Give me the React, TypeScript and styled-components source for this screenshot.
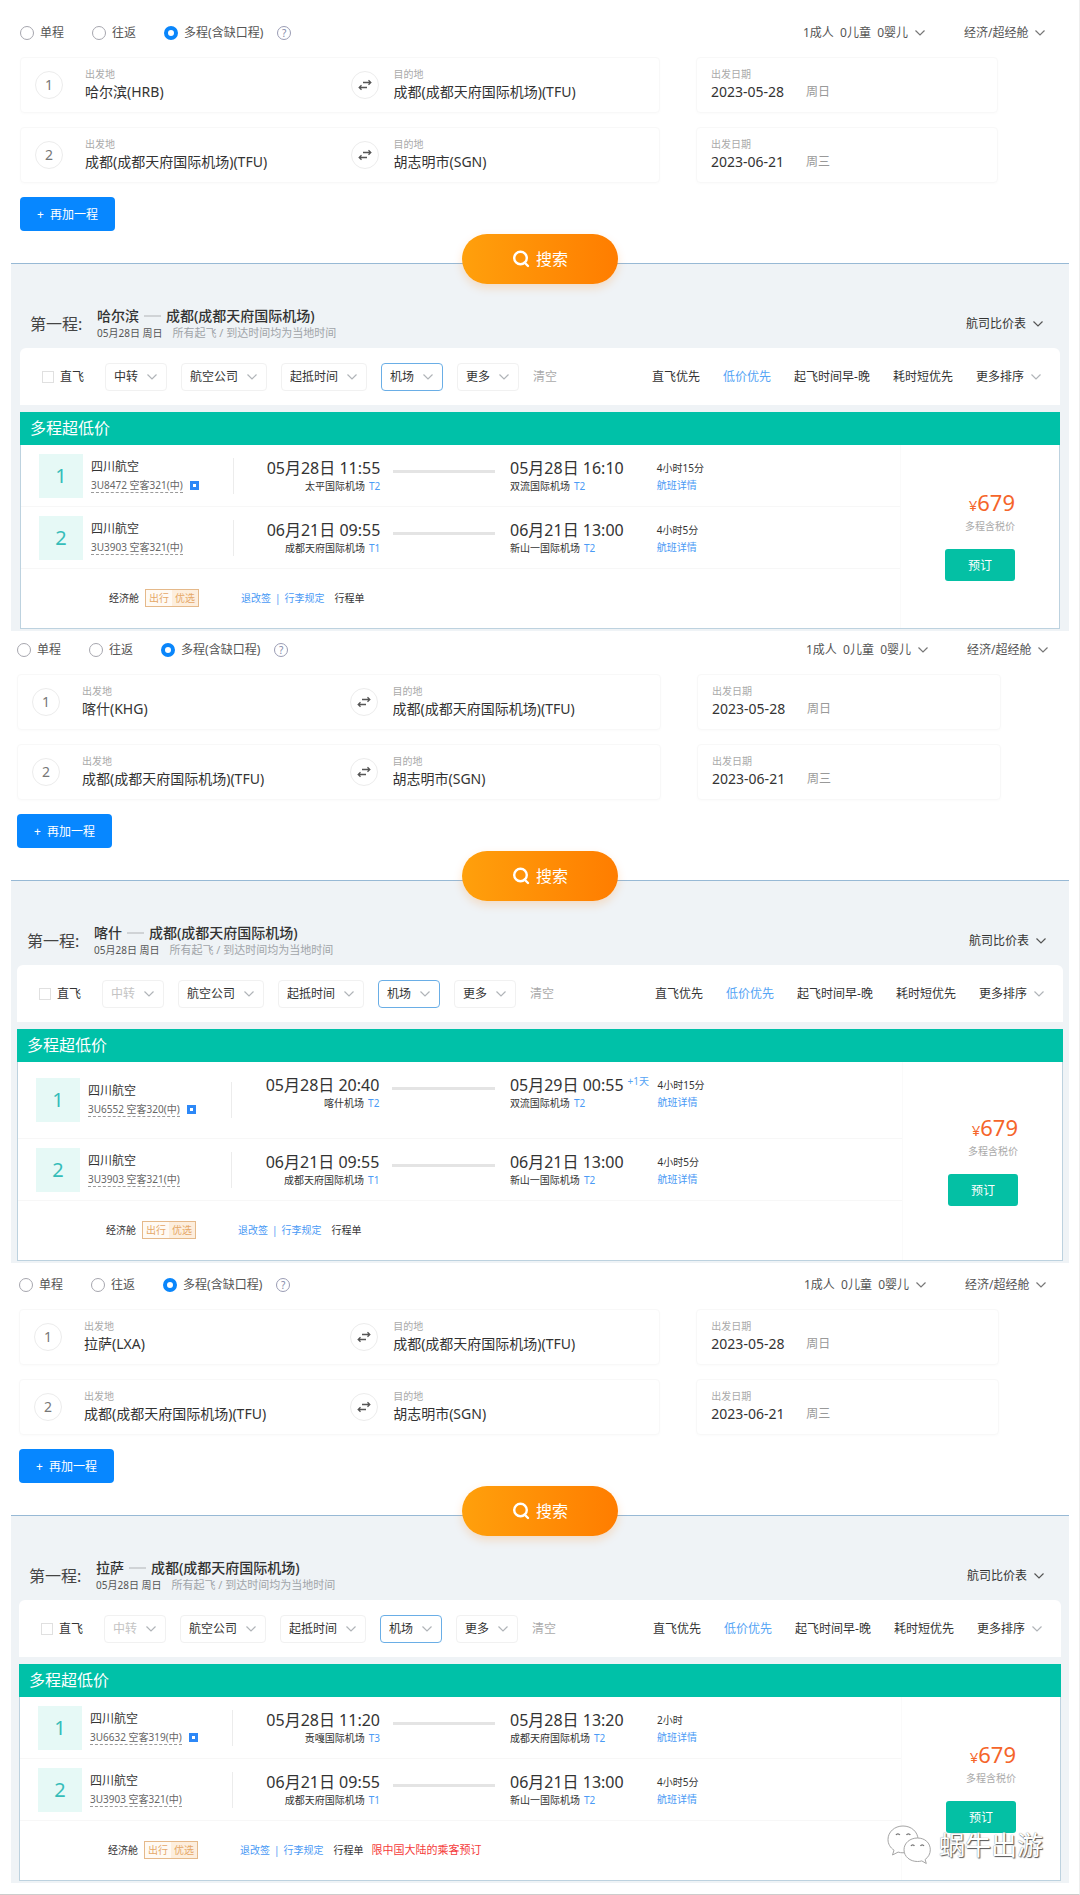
import React, { useId, useState } from "react";
import styled, { createGlobalStyle } from "styled-components";

const GlobalStyle = createGlobalStyle`
  *, *::before, *::after { box-sizing: border-box; }
  body {
    margin: 0;
    background: #fff;
    color: #333;
    font-family: "Noto Sans", "Noto Sans CJK SC", sans-serif;
    font-size: 12px;
    line-height: 18px;
  }
  button, input, select { font-family: inherit; color: inherit; }
  a { color: #4a9af5; text-decoration: none; }
`;

type Flight = {
  number: string;
  shared?: boolean;
  depart: string;
  departAirport: string;
  departTerminal: string;
  arrive: string;
  arriveAirport: string;
  arriveTerminal: string;
  dayShift?: string;
  duration: string;
  tall?: boolean;
};

type Search = {
  city: string;
  code: string;
  inset: number;
  top: number;
  transferDisabled: boolean;
  flights: Flight[];
  warning?: string;
};

const returnFlight: Flight = {
  number: "3U3903 空客321(中)",
  depart: "06月21日 09:55",
  departAirport: "成都天府国际机场",
  departTerminal: "T1",
  arrive: "06月21日 13:00",
  arriveAirport: "新山一国际机场",
  arriveTerminal: "T2",
  duration: "4小时5分",
};

const searches: Search[] = [
  {
    city: "哈尔滨",
    code: "HRB",
    inset: 9,
    top: 23,
    transferDisabled: false,
    flights: [
      {
        number: "3U8472 空客321(中)",
        shared: true,
        depart: "05月28日 11:55",
        departAirport: "太平国际机场",
        departTerminal: "T2",
        arrive: "05月28日 16:10",
        arriveAirport: "双流国际机场",
        arriveTerminal: "T2",
        duration: "4小时15分",
      },
      returnFlight,
    ],
  },
  {
    city: "喀什",
    code: "KHG",
    inset: 6,
    top: 9,
    transferDisabled: true,
    flights: [
      {
        number: "3U6552 空客320(中)",
        shared: true,
        depart: "05月28日 20:40",
        departAirport: "喀什机场",
        departTerminal: "T2",
        arrive: "05月29日 00:55",
        arriveAirport: "双流国际机场",
        arriveTerminal: "T2",
        dayShift: "+1天",
        duration: "4小时15分",
        tall: true,
      },
      returnFlight,
    ],
  },
  {
    city: "拉萨",
    code: "LXA",
    inset: 8,
    top: 12,
    transferDisabled: true,
    flights: [
      {
        number: "3U6632 空客319(中)",
        shared: true,
        depart: "05月28日 11:20",
        departAirport: "贡嘎国际机场",
        departTerminal: "T3",
        arrive: "05月28日 13:20",
        arriveAirport: "成都天府国际机场",
        arriveTerminal: "T2",
        duration: "2小时",
      },
      returnFlight,
    ],
    warning: "限中国大陆的乘客预订",
  },
];

/* ---------- page ---------- */

const Page = styled.main`
  position: relative;
  min-height: 100vh;
  padding: 0 10px 0 11px;
  border-right: 1px solid #eeeeee;
  border-bottom: 1px solid #cccccc;
`;

/* ---------- search form ---------- */

const SearchForm = styled.form<{ $inset: number; $top: number }>`
  display: flex;
  flex-direction: column;
  padding: ${(p) => p.$top}px ${(p) => p.$inset}px 0;
`;

const TopRow = styled.div`
  display: flex;
  align-items: center;
  justify-content: space-between;
  height: 20px;
  padding-right: 14px;
  margin-bottom: 14px;
`;

const TripTypes = styled.div`
  display: flex;
  align-items: center;
  gap: 28px;
`;

const Option = styled.label`
  display: flex;
  align-items: center;
  gap: 6px;
  color: #555;
`;

const Radio = styled.input`
  appearance: none;
  width: 14px;
  height: 14px;
  margin: 0;
  border: 1px solid #a6a6ae;
  border-radius: 50%;
  background: #fff;
  &:checked { border: 4px solid #0a86fb; }
`;

const WithHelp = styled.div`
  display: flex;
  align-items: center;
  gap: 14px;
`;

const HelpButton = styled.button`
  width: 14px;
  height: 14px;
  padding: 0;
  border: 1px solid #9a9cb4;
  border-radius: 50%;
  background: none;
  color: #8288a8;
  font-size: 10px;
  line-height: 12px;
`;

const TopMenus = styled.div`
  display: flex;
  gap: 38px;
  color: #555;
`;

const Segments = styled.div`
  display: grid;
  row-gap: 14px;
  margin-bottom: 14px;
`;

const Segment = styled.div`
  display: grid;
  grid-template-columns: 640fr 302fr;
  column-gap: 36px;
  padding-right: 62px;
`;

const Card = styled.div`
  height: 56px;
  border: 1px solid #f8f8f8;
  border-radius: 4px;
  box-shadow: 0 1px 3px rgba(0, 0, 0, 0.02);
`;

const RouteCard = styled(Card)`
  display: grid;
  grid-template-columns: 50px 1fr 43px 1fr;
  align-items: center;
  padding-left: 14px;
`;

const DateCard = styled(Card)`
  display: flex;
  align-items: center;
  padding-left: 14px;
`;

const Circle = styled.span`
  display: flex;
  align-items: center;
  justify-content: center;
  width: 28px;
  height: 28px;
  border: 1px solid #ececec;
  border-radius: 50%;
  color: #777;
  font-size: 14px;
`;

const SwapButton = styled.button`
  display: flex;
  align-items: center;
  justify-content: center;
  width: 28px;
  height: 28px;
  padding: 0;
  border: 1px solid #ececec;
  border-radius: 50%;
  background: #fff;
`;

const FieldBox = styled.div`
  display: flex;
  flex-direction: column;
  min-width: 0;
  padding-bottom: 3px;
`;

const FieldLabel = styled.label`
  color: #aaa;
  font-size: 10px;
  line-height: 16px;
`;

const FieldInput = styled.input<{ $short?: boolean }>`
  width: ${(p) => (p.$short ? "95px" : "100%")};
  height: 20px;
  padding: 0;
  border: 0;
  outline: 0;
  background: none;
  font-size: 14px;
  line-height: 20px;
`;

const DateLine = styled.div`
  display: flex;
  align-items: center;
  color: #999;
  input { color: #333; }
`;

const AddButton = styled.button`
  align-self: flex-start;
  height: 34px;
  padding: 0 17px;
  border: 0;
  border-radius: 4px;
  background: #0787ff;
  color: #fff;
  font-size: 12px;
  white-space: pre;
`;

const SubmitButton = styled.button`
  position: relative;
  z-index: 1;
  align-self: center;
  display: flex;
  align-items: center;
  justify-content: center;
  gap: 6px;
  width: 156px;
  height: 50px;
  margin: 3px 0 -21px;
  border: 0;
  border-radius: 25px;
  background: linear-gradient(90deg, #ffa00c, #ff7d00);
  box-shadow: 0 4px 10px rgba(255, 125, 0, 0.2);
  color: #fff;
  font-size: 16px;
  line-height: 20px;
`;

/* ---------- drop-downs ---------- */

const MenuBox = styled.span<{ $boxed?: boolean; $active?: boolean }>`
  display: inline-flex;
  align-items: center;
  gap: ${(p) => (p.$boxed ? "7px" : "5px")};
  height: ${(p) => (p.$boxed ? "28px" : "20px")};
  padding: 0 ${(p) => (p.$boxed ? "8px" : "0")};
  border: ${(p) => (p.$boxed ? "1px solid" : "0 solid")};
  border-color: ${(p) => (p.$active ? "#6aaee6" : "#f1f1f1")};
  border-radius: 4px;
`;

const MenuSelect = styled.select`
  appearance: none;
  padding: 0;
  border: 0;
  outline: 0;
  background: none;
  font-size: 12px;
  line-height: 18px;
  &:disabled { color: #c4c4c4; opacity: 1; }
`;

/* ---------- results ---------- */

const Results = styled.section<{ $inset: number }>`
  padding: 0 ${(p) => p.$inset}px 2px;
  border-top: 1px solid #97b9d5;
  background: #eff3f6;
`;

const Head = styled.header`
  display: flex;
  align-items: center;
  height: 84px;
  padding: 36px 16px 0 10px;
`;

const LegName = styled.h2`
  flex: 0 0 67px;
  margin: 0;
  font-size: 16px;
  font-weight: 400;
  color: #444;
`;

const RouteBlock = styled.div`
  flex: 1;
`;

const RouteTitle = styled.h3`
  display: flex;
  align-items: center;
  gap: 5px;
  margin: 0;
  font-size: 14px;
  font-weight: 500;
  line-height: 18px;
`;

const Dash = styled.span`
  width: 17px;
  height: 2px;
  background: #d0d3d6;
`;

const RouteMeta = styled.p`
  display: flex;
  gap: 10px;
  margin: 0;
  font-size: 10px;
  line-height: 16px;
  color: #555;
`;

const Note = styled.span`
  font-size: 11px;
  color: #a0a4a8;
`;

const Filters = styled.div`
  display: flex;
  align-items: center;
  justify-content: space-between;
  height: 57px;
  margin-bottom: 7px;
  padding: 0 18px 0 22px;
  border-radius: 6px 6px 0 0;
  background: #fff;
`;

const FilterGroup = styled.div`
  display: flex;
  align-items: center;
  gap: 14px;
`;

const SortGroup = styled.div`
  display: flex;
  align-items: center;
  gap: 23px;
`;

const CheckLabel = styled.label`
  display: flex;
  align-items: center;
  gap: 6px;
  margin-right: 7px;
`;

const CheckBox = styled.input`
  appearance: none;
  width: 12px;
  height: 12px;
  margin: 0;
  border: 1px solid #e0e0e0;
  background: #fff;
  &:checked { background: #0a86fb; }
`;

const TextButton = styled.button<{ $tone?: "muted" | "active" }>`
  padding: 0;
  border: 0;
  background: none;
  font-size: 12px;
  line-height: 18px;
  color: ${(p) => (p.$tone === "muted" ? "#aaa" : p.$tone === "active" ? "#55a4f5" : "#333")};
`;

const Banner = styled.h4`
  height: 33px;
  margin: 0;
  padding-left: 10px;
  background: #00c1a8;
  color: #fff;
  font-size: 16px;
  font-weight: 400;
  line-height: 33px;
`;

const Body = styled.div`
  display: grid;
  grid-template-columns: 881fr 159fr;
  border: 1px solid #bdd2df;
  border-top: 0;
  background: #fff;
`;

const FlightRow = styled.div<{ $tall?: boolean }>`
  display: grid;
  grid-template-columns: 213fr 147fr 130fr 147fr 244fr;
  height: ${(p) => (p.$tall ? "77px" : "62px")};
  border-bottom: 1px solid #f7f7f7;
`;

const Carrier = styled.div`
  display: flex;
  align-items: center;
  gap: 8px;
  align-self: center;
  height: 44px;
  padding-left: 18px;
`;

const CarrierText = styled.div`
  flex: 1;
  display: flex;
  flex-direction: column;
  gap: 2px;
  height: 36px;
  border-right: 1px solid #ececec;
`;

const Badge = styled.span`
  width: 44px;
  height: 44px;
  background: #e6f9f6;
  color: #35bdb9;
  font-size: 20px;
  line-height: 44px;
  text-align: center;
`;

const FlightNumber = styled.span`
  display: flex;
  align-items: center;
  gap: 7px;
  font-size: 10px;
  line-height: 14px;
  color: #666;
`;

const Dashed = styled.span`
  border-bottom: 1px dashed #999;
`;

const ShareMark = styled.span`
  width: 9px;
  height: 9px;
  border: 3px solid #2d88f7;
  background: #fff;
`;

const Stop = styled.div<{ $end?: boolean }>`
  padding-top: 13px;
  text-align: ${(p) => (p.$end ? "right" : "left")};
  white-space: nowrap;
`;

const Time = styled.div`
  font-size: 16px;
  line-height: 20px;
`;

const Shift = styled.sup`
  margin-left: 4px;
  color: #55a4f5;
  font-size: 10px;
  line-height: 10px;
`;

const Airport = styled.div`
  font-size: 10px;
  line-height: 16px;
`;

const Terminal = styled.span`
  margin-left: 4px;
  color: #4a9af5;
`;

const Track = styled.span`
  height: 3px;
  margin: 25px 15px 0 13px;
  background: #e4e4e4;
`;

const Duration = styled.div`
  display: flex;
  flex-direction: column;
  align-items: flex-start;
  padding-top: 15px;
  font-size: 10px;
  line-height: 17px;
`;

const Fare = styled.div`
  display: flex;
  align-items: center;
  height: 59px;
  padding: 0 0 2px 88px;
  font-size: 10px;
`;

const Tag = styled.span`
  display: flex;
  height: 18px;
  margin: 0 42px 0 6px;
  border: 1px solid #e5b98a;
  color: #e5a868;
  line-height: 16px;
`;

const TagPart = styled.span<{ $tint?: boolean }>`
  padding: 0 3px;
  background: ${(p) => (p.$tint ? "#fdeedd" : "#fffaf4")};
`;

const RuleSep = styled.span`
  margin: 0 4px;
  color: #4a9af5;
`;

const Itinerary = styled.span`
  margin-left: 10px;
`;

const Warning = styled.span`
  margin-left: 8px;
  font-size: 11px;
  color: #f53b3b;
`;

const PriceBox = styled.aside`
  display: flex;
  flex-direction: column;
  align-items: flex-end;
  justify-content: center;
  padding: 0 44px 3px 0;
  border-left: 1px solid #fafafa;
`;

const Price = styled.strong`
  color: #f5652a;
  font-size: 22px;
  font-weight: 400;
  line-height: 26px;
`;

const Currency = styled.span`
  font-size: 15px;
`;

const PriceNote = styled.span`
  color: #aaa;
  font-size: 10px;
  line-height: 16px;
`;

const BookButton = styled.button`
  width: 70px;
  height: 32px;
  margin-top: 15px;
  padding: 0;
  border: 0;
  border-radius: 3px;
  background: #04c0a4;
  color: #fff;
  font-size: 12px;
`;

const Watermark = styled.div`
  position: absolute;
  right: 36px;
  bottom: 29px;
  z-index: 2;
  display: flex;
  align-items: center;
  gap: 8px;
  color: #fff;
  font-size: 26px;
  line-height: 36px;
  text-shadow: 1px 1px 1px #555, 0 0 1px #777;
  pointer-events: none;
`;

/* ---------- drawings ---------- */

const Chevron = ({ color = "#b0b4b8" }: { color?: string }) => (
  <svg width="12" height="8" viewBox="0 0 12 8" fill="none" stroke={color} aria-hidden="true">
    <path d="M1.5 1.5 6 6l4.5-4.5" strokeWidth="1.2" />
  </svg>
);

const SwapIcon = () => (
  <svg width="14" height="12" viewBox="0 0 14 12" fill="none" stroke="#555" strokeWidth="1.3" aria-hidden="true">
    <path d="M5 3.5h8M10.5 1.3 12.8 3.5 10.5 5.7M9 8.5H1M3.5 6.300 1.200 8.500 3.500 10.700" />
  </svg>
);

const SearchIcon = () => (
  <svg width="18" height="18" viewBox="0 0 18 18" fill="none" stroke="#fff" strokeWidth="2.4" aria-hidden="true">
    <circle cx="8.5" cy="8" r="6.3" />
    <path d="m12.5 12.5 3.5 3.5" strokeLinecap="round" />
  </svg>
);

const ChatIcon = () => (
  <svg width="44" height="40" viewBox="0 0 44 40" fill="#fff" stroke="#a5a5a5" strokeWidth="1" aria-hidden="true">
    <path d="M16 1C7.500 1 1 7 1 14.500c0 4.500 2.300 8.200 6 10.700L5.500 30l5.600-2.900c1.600.5 3.200.7 4.900.7 8.500 0 15-5.800 15-13.300S24.500 1 16 1Z" />
    <path d="M30.500 13C23 13 17 18 17 24.800s6 11.700 13.500 11.700c1.500 0 3-.2 4.300-.6l4.500 2.600-1.200-4c3.200-2.200 5.200-5.700 5.200-9.700C43.300 18 38 13 30.500 13Z" />
    <path d="M9 10c.8-1.600 3-1.600 3.800 0M19.500 10c.8-1.600 3-1.600 3.800 0M24 21c.7-1.500 2.700-1.500 3.400 0M33.500 21c.7-1.500 2.700-1.500 3.400 0" fill="none" stroke="#777" strokeWidth="1.3" />
  </svg>
);

/* ---------- parts ---------- */

type DropdownProps = {
  name: string;
  text?: string;
  boxed?: boolean;
  active?: boolean;
  disabled?: boolean;
  chevron?: string;
};

const Dropdown = ({ name, text, boxed, active, disabled, chevron }: DropdownProps) => (
  <MenuBox $boxed={boxed} $active={active}>
    <MenuSelect aria-label={name} disabled={disabled}>
      <option>{text ?? name}</option>
    </MenuSelect>
    <Chevron color={chevron} />
  </MenuBox>
);

const Field = ({ label, value, children, short }: { label: string; value: string; children?: React.ReactNode; short?: boolean }) => {
  const id = useId();
  const input = <FieldInput id={id} defaultValue={value} $short={short} />;
  return (
    <FieldBox>
      <FieldLabel htmlFor={id}>{label}</FieldLabel>
      {children ? <DateLine>{input}{children}</DateLine> : input}
    </FieldBox>
  );
};

const tripTypes = ["单程", "往返", "多程(含缺口程)"];

const SearchPanel = ({ search }: { search: Search }) => {
  const group = useId();
  const [trip, setTrip] = useState(tripTypes[2]);
  const hub = "成都(成都天府国际机场)(TFU)";
  const segments = [
    { from: `${search.city}(${search.code})`, to: hub, date: "2023-05-28", day: "周日" },
    { from: hub, to: "胡志明市(SGN)", date: "2023-06-21", day: "周三" },
  ];
  const options = tripTypes.map((type) => (
    <Option key={type}>
      <Radio type="radio" name={group} checked={trip === type} onChange={() => setTrip(type)} />
      {type}
    </Option>
  ));
  return (
    <SearchForm $inset={search.inset} $top={search.top} onSubmit={(e) => e.preventDefault()}>
      <TopRow>
        <TripTypes>
          {options[0]}
          {options[1]}
          <WithHelp>
            {options[2]}
            <HelpButton type="button">?</HelpButton>
          </WithHelp>
        </TripTypes>
        <TopMenus>
          <Dropdown name="乘客" text={"1成人\u00a0\u00a00儿童\u00a0\u00a00婴儿"} chevron="#777" />
          <Dropdown name="舱位" text="经济/超经舱" chevron="#777" />
        </TopMenus>
      </TopRow>
      <Segments>
        {segments.map((s, i) => (
          <Segment key={s.date}>
            <RouteCard>
              <Circle>{i + 1}</Circle>
              <Field label="出发地" value={s.from} />
              <SwapButton type="button" aria-label="交换">
                <SwapIcon />
              </SwapButton>
              <Field label="目的地" value={s.to} />
            </RouteCard>
            <DateCard>
              <Field label="出发日期" value={s.date} short>
                <span>{s.day}</span>
              </Field>
            </DateCard>
          </Segment>
        ))}
      </Segments>
      <AddButton type="button">{"+  再加一程"}</AddButton>
      <SubmitButton type="submit">
        <SearchIcon />
        搜索
      </SubmitButton>
    </SearchForm>
  );
};

const FlightLine = ({ flight, index }: { flight: Flight; index: number }) => (
  <FlightRow $tall={flight.tall}>
    <Carrier>
      <Badge>{index}</Badge>
      <CarrierText>
        <span>四川航空</span>
        <FlightNumber>
          <Dashed>{flight.number}</Dashed>
          {flight.shared && <ShareMark />}
        </FlightNumber>
      </CarrierText>
    </Carrier>
    <Stop $end>
      <Time>{flight.depart}</Time>
      <Airport>
        {flight.departAirport}
        <Terminal>{flight.departTerminal}</Terminal>
      </Airport>
    </Stop>
    <Track />
    <Stop>
      <Time>
        {flight.arrive}
        {flight.dayShift && <Shift>{flight.dayShift}</Shift>}
      </Time>
      <Airport>
        {flight.arriveAirport}
        <Terminal>{flight.arriveTerminal}</Terminal>
      </Airport>
    </Stop>
    <Duration>
      <span>{flight.duration}</span>
      <a href="#detail">航班详情</a>
    </Duration>
  </FlightRow>
);

const ResultPanel = ({ search }: { search: Search }) => (
  <Results $inset={search.inset}>
    <Head>
      <LegName>第一程:</LegName>
      <RouteBlock>
        <RouteTitle>
          {search.city}
          <Dash />
          成都(成都天府国际机场)
        </RouteTitle>
        <RouteMeta>
          <span>05月28日 周日</span>
          <Note>所有起飞 / 到达时间均为当地时间</Note>
        </RouteMeta>
      </RouteBlock>
      <Dropdown name="航司比价表" chevron="#555" />
    </Head>
    <Filters>
      <FilterGroup>
        <CheckLabel>
          <CheckBox type="checkbox" />
          直飞
        </CheckLabel>
        <Dropdown name="中转" boxed disabled={search.transferDisabled} />
        <Dropdown name="航空公司" boxed />
        <Dropdown name="起抵时间" boxed />
        <Dropdown name="机场" boxed active />
        <Dropdown name="更多" boxed />
        <TextButton type="button" $tone="muted">清空</TextButton>
      </FilterGroup>
      <SortGroup>
        <TextButton type="button">直飞优先</TextButton>
        <TextButton type="button" $tone="active">低价优先</TextButton>
        <TextButton type="button">起飞时间早-晚</TextButton>
        <TextButton type="button">耗时短优先</TextButton>
        <Dropdown name="更多排序" />
      </SortGroup>
    </Filters>
    <Banner>多程超低价</Banner>
    <Body>
      <div>
        {search.flights.map((f, i) => (
          <FlightLine key={f.number} flight={f} index={i + 1} />
        ))}
        <Fare>
          经济舱
          <Tag>
            <TagPart>出行</TagPart>
            <TagPart $tint>优选</TagPart>
          </Tag>
          <a href="#refund">退改签</a>
          <RuleSep>|</RuleSep>
          <a href="#baggage">行李规定</a>
          <Itinerary>行程单</Itinerary>
          {search.warning && <Warning>{search.warning}</Warning>}
        </Fare>
      </div>
      <PriceBox>
        <Price>
          <Currency>¥</Currency>679
        </Price>
        <PriceNote>多程含税价</PriceNote>
        <BookButton type="button">预订</BookButton>
      </PriceBox>
    </Body>
  </Results>
);

export default function App() {
  return (
    <Page>
      <GlobalStyle />
      {searches.map((search) => (
        <React.Fragment key={search.code}>
          <SearchPanel search={search} />
          <ResultPanel search={search} />
        </React.Fragment>
      ))}
      <Watermark>
        <ChatIcon />
        蜗牛出游
      </Watermark>
    </Page>
  );
}
